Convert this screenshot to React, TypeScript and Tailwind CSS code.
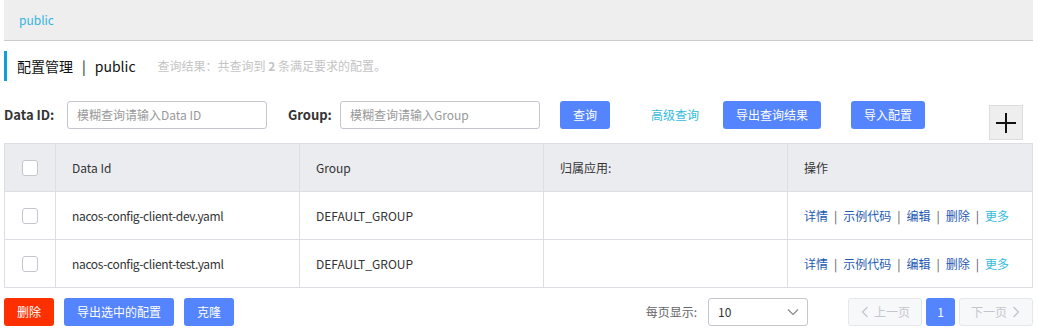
import React from "react";

const font = { fontFamily: '"Noto Sans CJK SC", "Noto Sans", sans-serif' };

function Checkbox() {
  return <span className="block w-[16px] h-[16px] rounded-[3px] border border-[#c4c6cf] bg-white" />;
}

function Btn({ children, className = "" }: { children: React.ReactNode; className?: string }) {
  return (
    <button className={`h-[28px] rounded-[3px] bg-[#5584ff] text-white text-[12px] px-[12px] leading-none ${className}`}>
      {children}
    </button>
  );
}

function Ops() {
  const sep = <span className="mx-[6px] text-[#555]">|</span>;
  return (
    <span className="text-[12px] text-[#1d5ab3]">
      <span>详情</span>
      {sep}
      <span>示例代码</span>
      {sep}
      <span>编辑</span>
      {sep}
      <span>删除</span>
      {sep}
      <span className="text-[#33bbdd]">更多</span>
    </span>
  );
}

const rows = ["nacos-config-client-dev.yaml", "nacos-config-client-test.yaml"];

export default function App() {
  return (
    <div className="w-[1038px] h-[333px] bg-white pl-[4px] pr-[5px] overflow-hidden text-[#333]" style={font}>
      <div className="h-[41px] bg-[#eeeeee] border-b border-[#cccccc] flex items-center pl-[15px]">
        <span className="text-[12px] text-[#33b5e0]">public</span>
      </div>

      <div className="mt-[10px] h-[30px] border-l-[3px] border-[#0fa0d6] flex items-center pl-[10px]">
        <span className="text-[14px] text-[#111]">配置管理</span>
        <span className="text-[14px] text-[#111] mx-[9px]">|</span>
        <span className="text-[14px] text-[#111]">public</span>
        <span className="ml-[22px] text-[12px] text-[#c4c4c4]">
          查询结果：共查询到 <b className="font-bold">2</b> 条满足要求的配置。
        </span>
      </div>

      <div className="mt-[20px] flex items-start">
        <div className="h-[28px] flex items-center">
          <span className="text-[13px] font-bold text-[#333] w-[63px]">Data ID:</span>
          <div className="w-[200px] h-[28px] border border-[#c4c6cf] rounded-[3px] flex items-center px-[9px]">
            <span className="text-[12px] text-[#999]">模糊查询请输入Data ID</span>
          </div>
          <span className="text-[13px] font-bold text-[#333] ml-[21px] w-[52px]">Group:</span>
          <div className="w-[200px] h-[28px] border border-[#c4c6cf] rounded-[3px] flex items-center px-[9px]">
            <span className="text-[12px] text-[#999]">模糊查询请输入Group</span>
          </div>
          <Btn className="ml-[20px] w-[50px] px-0">查询</Btn>
          <span className="ml-[41px] text-[12px] text-[#33bbdd]">高级查询</span>
          <Btn className="ml-[24px] w-[98px] px-0">导出查询结果</Btn>
          <Btn className="ml-[30px] w-[74px] px-0">导入配置</Btn>
        </div>
        <div className="ml-[64px] mt-[4px] w-[34px] h-[35px] bg-[#eeeeee] border border-[#dddddd] flex items-center justify-center">
          <svg width="22" height="22" viewBox="0 0 22 22">
            <path d="M11 1v20M1 11h20" stroke="#111" strokeWidth="2" />
          </svg>
        </div>
      </div>

      <table className="mt-[3px] w-[1029px] border-collapse table-fixed text-[12px]">
        <colgroup>
          <col className="w-[51px]" />
          <col className="w-[244px]" />
          <col className="w-[244px]" />
          <col className="w-[244px]" />
          <col />
        </colgroup>
        <thead>
          <tr className="h-[48px] bg-[#ebecf0]">
            <th className="border border-[#dcdee3] font-normal">
              <div className="flex justify-center"><Checkbox /></div>
            </th>
            <th className="border border-[#dcdee3] font-normal text-left pl-[16px] text-[#333]">Data Id</th>
            <th className="border border-[#dcdee3] font-normal text-left pl-[16px] text-[#333]">Group</th>
            <th className="border border-[#dcdee3] font-normal text-left pl-[16px] text-[#333]">归属应用:</th>
            <th className="border border-[#dcdee3] font-normal text-left pl-[16px] text-[#333]">操作</th>
          </tr>
        </thead>
        <tbody>
          {rows.map((r) => (
            <tr key={r} className="h-[48px]">
              <td className="border border-[#dcdee3]">
                <div className="flex justify-center"><Checkbox /></div>
              </td>
              <td className="border border-[#dcdee3] pl-[16px] text-[#333] tracking-[-0.35px]">{r}</td>
              <td className="border border-[#dcdee3] pl-[16px] text-[#333]">DEFAULT_GROUP</td>
              <td className="border border-[#dcdee3]"></td>
              <td className="border border-[#dcdee3] pl-[16px]"><Ops /></td>
            </tr>
          ))}
        </tbody>
      </table>

      <div className="mt-[10px] flex items-center">
        <button className="h-[28px] w-[50px] rounded-[3px] bg-[#ff3000] text-white text-[12px]">删除</button>
        <Btn className="ml-[10px] w-[110px] px-0">导出选中的配置</Btn>
        <Btn className="ml-[10px] w-[50px] px-0">克隆</Btn>
        <div className="flex-1" />
        <span className="text-[12px] text-[#666] mr-[11px]">每页显示:</span>
        <div className="w-[100px] h-[28px] border border-[#c4c6cf] rounded-[3px] flex items-center justify-between pl-[9px] pr-[8px]">
          <span className="text-[12px] text-[#333]">10</span>
          <svg width="12" height="12" viewBox="0 0 12 12">
            <path d="M1 3.5l5 5 5-5" stroke="#888" strokeWidth="1.2" fill="none" />
          </svg>
        </div>
        <div className="ml-[40px] w-[74px] h-[28px] rounded-[3px] border border-[#e6e7eb] bg-[#f7f8fa] flex items-center justify-center text-[12px] text-[#c4c6cf]">
          <svg width="10" height="12" viewBox="0 0 10 12" className="mr-[4px]">
            <path d="M7.5 1l-5 5 5 5" stroke="#c4c6cf" strokeWidth="1.3" fill="none" />
          </svg>
          上一页
        </div>
        <div className="ml-[4px] w-[29px] h-[28px] rounded-[3px] bg-[#5584ff] text-white text-[12px] flex items-center justify-center">1</div>
        <div className="ml-[4px] w-[74px] h-[28px] rounded-[3px] border border-[#e6e7eb] bg-[#f7f8fa] flex items-center justify-center text-[12px] text-[#c4c6cf]">
          下一页
          <svg width="10" height="12" viewBox="0 0 10 12" className="ml-[4px]">
            <path d="M2.5 1l5 5-5 5" stroke="#c4c6cf" strokeWidth="1.3" fill="none" />
          </svg>
        </div>
      </div>
    </div>
  );
}
